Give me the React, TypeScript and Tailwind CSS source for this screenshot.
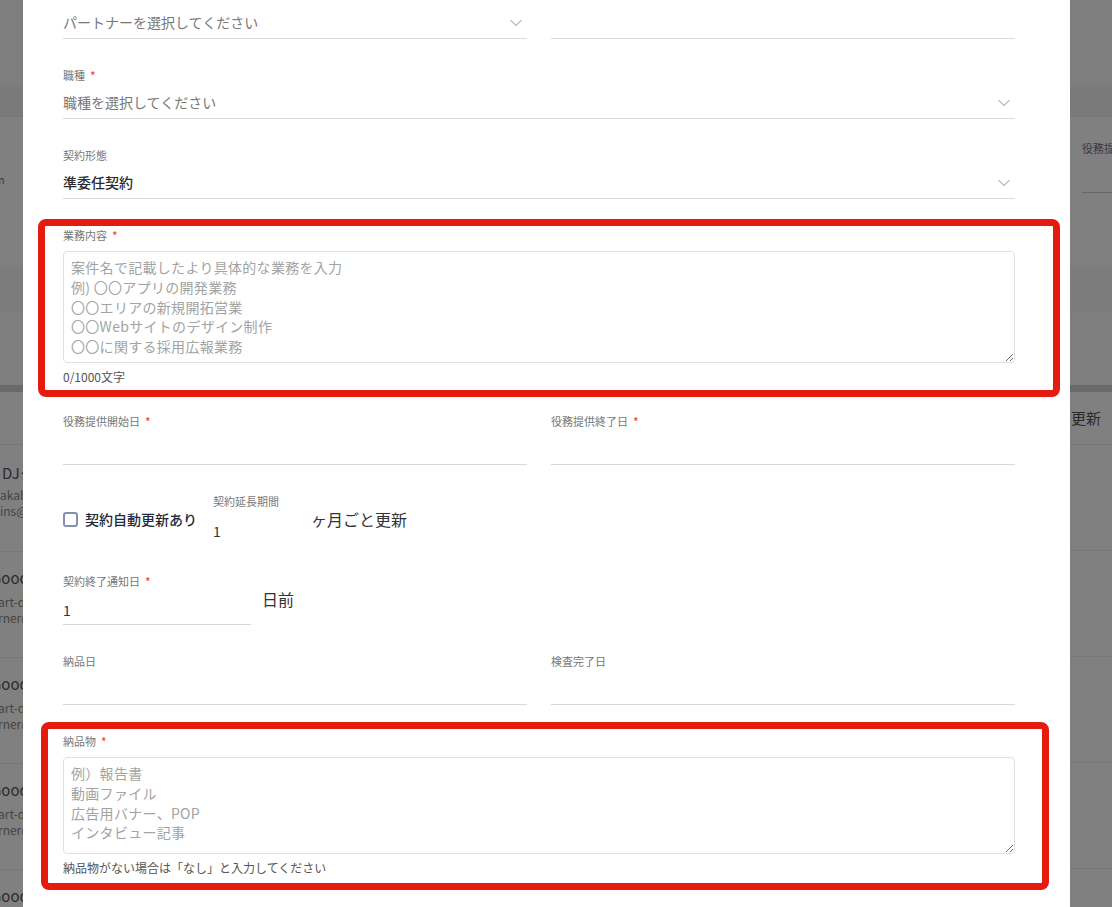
import type { ReactNode } from 'react'

const font = "font-['Noto_Sans_CJK_JP','Noto_Sans',sans-serif]"

function Chevron() {
  return (
    <svg width="12" height="8" viewBox="0 0 12 8" fill="none" aria-hidden="true">
      <path d="M1 1.5l5 5 5-5" stroke="#c4c4c4" strokeWidth="1.6" strokeLinecap="round" strokeLinejoin="round" />
    </svg>
  )
}

function Label({ text, required }: { text: string; required?: boolean }) {
  return (
    <div className="flex h-4 items-center text-[11px] text-[#777]">
      {text}
      {required && <span className="ml-[5px] mt-[2px] text-[12px] leading-none text-[#ee3b30]">*</span>}
    </div>
  )
}

function Field({ label, required, children, className = '' }: { label: string; required?: boolean; children: ReactNode; className?: string }) {
  return (
    <div className={className}>
      <Label text={label} required={required} />
      <div className="mt-1">{children}</div>
    </div>
  )
}

function SelectBox({ text, dark }: { text: string; dark?: boolean }) {
  return (
    <div className="flex h-8 items-center justify-between border-b border-[#d6dce2] pr-[5px]">
      <span className={dark ? 'text-[14px] font-medium text-[#2b2b2b]' : 'text-[14px] text-[#777]'}>{text}</span>
      <Chevron />
    </div>
  )
}

function LineInput({ value }: { value?: string }) {
  return (
    <div className="flex h-8 items-center border-b border-[#d9d9d9] pt-1 text-[14px] text-[#333]">{value}</div>
  )
}

function Annotation({ className }: { className: string }) {
  return <div className={`pointer-events-none absolute rounded-lg border-[7px] border-[#e61b10] ${className}`} />
}

const businessPlaceholder = '案件名で記載したより具体的な業務を入力\n例) 〇〇アプリの開発業務\n〇〇エリアの新規開拓営業\n〇〇Webサイトのデザイン制作\n〇〇に関する採用広報業務'
const deliverablePlaceholder = '例）報告書\n動画ファイル\n広告用バナー、POP\nインタビュー記事'

const textareaCls =
  'mt-2 block w-full rounded border border-[#e0e0e0] px-[7px] py-[6px] text-[14px] leading-[19.75px] tracking-[0.3px] text-[#333] outline-none placeholder:text-[#a3a3a3]'

// page behind the overlay, only the slivers at the edges are visible
function LeftStrip() {
  return (
    <div className="flex w-[23px] shrink-0 flex-col overflow-hidden whitespace-nowrap">
      <div className="h-[85px] shrink-0 bg-[#7e7e7e]" />
      <div className="h-[32px] shrink-0 border-b border-[#747474] bg-[#7a7a7a]" />
      <div className="flex h-[148px] shrink-0 flex-col bg-[#808080] pt-[54px]">
        <span className="-ml-[20px] text-[11px] leading-4 text-[#3a3a3a]">form</span>
      </div>
      <div className="h-[48px] shrink-0 bg-[#7c7c7c]" />
      <div className="h-[72px] shrink-0 bg-[#7f7f7f]" />
      <div className="h-[7px] shrink-0 bg-[#6a6a6a]" />
      <div className="h-[53px] shrink-0 border-b border-[#777] bg-[#808080]" />
      <div className="flex h-[107px] shrink-0 flex-col border-b border-[#777] bg-[#808080] pt-[17px]">
        <span className="ml-[2px] text-[15px] leading-[22px] text-[#2b2b2b]">DJタナカ</span>
        <span className="mt-[3px] text-[12px] leading-4 text-[#444]">akabayashi</span>
        <span className="text-[12px] leading-4 text-[#444]">ins@example</span>
      </div>
      {[0, 1, 2, 3].map((r) => (
        <div key={r} className="flex h-[106px] shrink-0 flex-col border-b border-[#777] bg-[#808080] pt-[15px]">
          <span className="-ml-[9px] text-[15px] leading-[22px] text-[#2b2b2b]">Good</span>
          <span className="-ml-[2px] mt-[5px] text-[12px] leading-4 text-[#444]">art-dept</span>
          <span className="-ml-[2px] text-[12px] leading-4 text-[#444]">rner@ex</span>
          <span className="-ml-[14px] text-[12px] leading-4 text-[#444]">.jp</span>
        </div>
      ))}
    </div>
  )
}

function RightStrip() {
  return (
    <div className="flex min-w-0 flex-1 flex-col overflow-hidden whitespace-nowrap">
      <div className="h-[85px] shrink-0 bg-[#7e7e7e]" />
      <div className="h-[32px] shrink-0 border-b border-[#747474] bg-[#7a7a7a]" />
      <div className="flex h-[148px] shrink-0 flex-col bg-[#808080] pl-[12px] pt-[23px]">
        <span className="text-[11px] leading-4 text-[#3a3a3a]">役務提供終了日</span>
        <div className="mt-[36px] border-b border-[#666]" />
      </div>
      <div className="h-[48px] shrink-0 bg-[#7c7c7c]" />
      <div className="h-[72px] shrink-0 bg-[#7f7f7f]" />
      <div className="h-[7px] shrink-0 bg-[#6a6a6a]" />
      <div className="flex h-[53px] shrink-0 items-center border-b border-[#777] bg-[#808080] pl-[1px]">
        <span className="text-[15px] text-[#2a2a2a]">更新</span>
      </div>
      {[0, 1, 2, 3, 4].map((r) => (
        <div key={r} className="h-[106px] shrink-0 border-b border-[#777] bg-[#808080]" />
      ))}
    </div>
  )
}

export default function App() {
  return (
    <div className={`flex h-[907px] w-full overflow-hidden bg-[#808080] ${font}`}>
      <LeftStrip />

      <div className="w-[1047px] shrink-0 bg-white pl-10 pr-[55px]">
        <div className="flex flex-col gap-7 pt-[7px]">
          <div className="grid grid-cols-2 gap-x-6">
            <SelectBox text="パートナーを選択してください" />
            <div className="h-8 border-b border-[#d6dce2]" />
          </div>

          <Field label="職種" required>
            <SelectBox text="職種を選択してください" />
          </Field>

          <Field label="契約形態">
            <SelectBox text="準委任契約" dark />
          </Field>

          <div className="relative">
            <Annotation className="-top-2 -bottom-3 -left-[25px] -right-[45px]" />
            <Label text="業務内容" required />
            <textarea readOnly placeholder={businessPlaceholder} className={`${textareaCls} h-[112px]`} />
            <p className="mt-[6px] text-[12px] leading-4 text-[#555]">0/1000文字</p>
          </div>

          <div className="grid grid-cols-2 gap-x-6">
            <Field label="役務提供開始日" required>
              <LineInput />
            </Field>
            <Field label="役務提供終了日" required>
              <LineInput />
            </Field>
          </div>

          <div className="flex h-[52px] items-center">
            <label className="flex items-center gap-[7px]">
              <span className="h-[15px] w-[15px] rounded-[3px] border-2 border-[#8292ab]" />
              <span className="text-[14px] font-medium text-[#1f2a3a]">契約自動更新あり</span>
            </label>
            <Field label="契約延長期間" className="ml-4 w-[90px]">
              <div className="flex h-8 items-center pt-1 text-[14px] text-[#333]">1</div>
            </Field>
            <span className="ml-2 text-[16px] text-[#333]">ヶ月ごと更新</span>
          </div>

          <div className="flex items-center">
            <Field label="契約終了通知日" required className="w-[188px]">
              <LineInput value="1" />
            </Field>
            <span className="ml-[11px] text-[16px] text-[#333]">日前</span>
          </div>

          <div className="grid grid-cols-2 gap-x-6">
            <Field label="納品日">
              <LineInput />
            </Field>
            <Field label="検査完了日">
              <LineInput />
            </Field>
          </div>

          <div className="relative">
            <Annotation className="-top-[11px] -bottom-[14px] -left-[22px] -right-[34px]" />
            <Label text="納品物" required />
            <textarea readOnly placeholder={deliverablePlaceholder} className={`${textareaCls} h-[97px]`} />
            <p className="mt-[6px] text-[12px] leading-4 text-[#555]">納品物がない場合は「なし」と入力してください</p>
          </div>
        </div>
      </div>

      <RightStrip />
    </div>
  )
}
